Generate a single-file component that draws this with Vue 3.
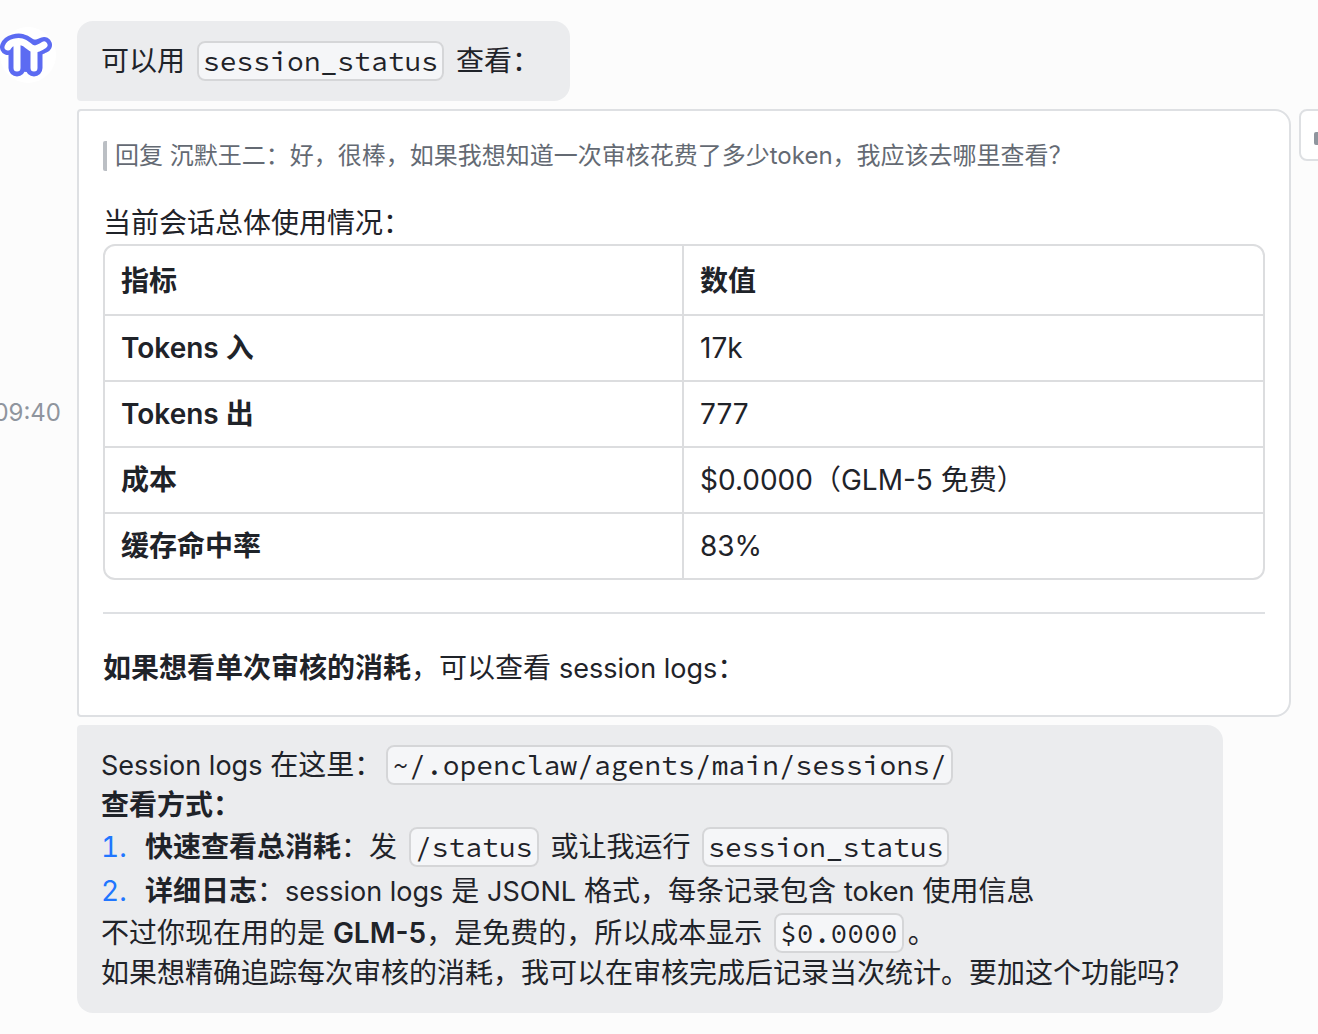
<script setup>
const rows = [
  { name: 'Tokens 入', value: '17k' },
  { name: 'Tokens 出', value: '777' },
  { name: '成本', value: '$0.0000（GLM-5 免费）' },
  { name: '缓存命中率', value: '83%' },
]
</script>

<template>
  <main class="chat" lang="zh-CN">
    <article class="message">
      <div class="gutter gutter-avatar">
        <svg class="avatar" viewBox="0 0 56 56" role="img" aria-label="头像">
          <circle cx="28" cy="28" r="28" fill="#ffffff" />
          <path d="M17 14H34V43L26 45L17 43Z" fill="#5c6bf2" />
          <g fill="none" stroke-linecap="round" stroke-linejoin="round">
            <g stroke="#5c6bf2">
              <path d="M8 20C10 15 18 14 22 15C27 16 29 21 34 21C38 21 41 19 44 18" stroke-width="16" />
              <path d="M17 17V41M34 21V41" stroke-width="17" />
            </g>
            <g stroke="#ffffff" stroke-width="7">
              <path d="M17 17V41M34 23V41" />
              <path d="M8 20C10 15 18 14 22 15C27 16 29 21 34 22C38 22 41 20 44 18" />
            </g>
          </g>
        </svg>
      </div>
      <div class="bubble bubble-first">
        <p>可以用 <code>session_status</code> 查看：</p>
      </div>
    </article>

    <article class="message">
      <div class="gutter gutter-time"><time>09:40</time></div>
      <section class="card">
        <blockquote>回复 沉默王二：好，很棒，如果我想知道一次审核花费了多少token，我应该去哪里查看？</blockquote>
        <p class="lead">当前会话总体使用情况：</p>
        <div class="table-frame">
          <table>
            <thead>
              <tr><th scope="col">指标</th><th scope="col">数值</th></tr>
            </thead>
            <tbody>
              <tr v-for="row in rows" :key="row.name">
                <th scope="row">{{ row.name }}</th>
                <td>{{ row.value }}</td>
              </tr>
            </tbody>
          </table>
        </div>
        <hr />
        <p><strong>如果想看单次审核的消耗</strong>，可以查看 <span class="latin">session logs</span>：</p>
      </section>
      <div class="actions">
        <button type="button" class="action" aria-label="赞">
          <svg viewBox="0 0 28 28" fill="#8f959e">
            <rect x="0" y="11" width="6" height="13" rx="2" />
            <path d="M8 12L13 4C16 4 17 6 16 11H23C25 11 26 13 25 15L23 22C22 24 21 24 20 24H8Z" />
          </svg>
        </button>
      </div>
    </article>

    <article class="message">
      <div class="gutter"></div>
      <div class="bubble bubble-last">
        <p><span class="latin">Session logs</span> 在这里：<code>~/.openclaw/agents/main/sessions/</code></p>
        <p><strong>查看方式：</strong></p>
        <ol>
          <li><span><strong>快速查看总消耗</strong>：发 <code>/status</code> 或让我运行 <code>session_status</code></span></li>
          <li><span><strong>详细日志</strong>：<span class="latin">session logs</span> 是 <span class="latin">JSONL</span> 格式，每条记录包含 <span class="latin">token</span> 使用信息</span></li>
        </ol>
        <p>不过你现在用的是 <strong>GLM-5</strong>，是免费的，所以成本显示 <code>$0.0000</code>。</p>
        <p>如果想精确追踪每次审核的消耗，我可以在审核完成后记录当次统计。要加这个功能吗？</p>
      </div>
    </article>
  </main>
</template>

<style>
body {
  background: #fcfcfc;
}
</style>

<style scoped>
.chat {
  display: flex;
  flex-direction: column;
  gap: 8px;
  padding: 21px 0;
  overflow: hidden;
  color: #1f2329;
  font-family: Inter, "Noto Sans CJK SC", sans-serif;
  font-size: 28px;
  line-height: 40px;
}

.message {
  display: grid;
  grid-template-columns: 77px minmax(0, 1fr) 27px;
}

.gutter {
  display: flex;
  justify-content: flex-end;
}

.gutter-avatar {
  justify-content: flex-start;
  align-items: flex-start;
  padding-top: 6px;
}

.gutter-time {
  align-items: center;
  padding-right: 16px;
  color: #8f959e;
  font-size: 24px;
}

.avatar {
  display: block;
  width: 56px;
  height: 56px;
}

p {
  margin: 0;
}

strong {
  font-weight: 600;
}

.latin {
  font-size: 27px;
  line-height: 1;
}

.bubble {
  justify-self: start;
  padding: 20px 30px 20px 24px;
  background: #ebecee;
}

.bubble-first {
  border-radius: 16px 16px 16px 4px;
}

.bubble-last {
  border-radius: 4px 16px 16px 16px;
}

code {
  margin: 0 4px;
  padding: 0 4px;
  border: 2px solid #d5d6d8;
  border-radius: 8px;
  background: #f5f6f8;
  font-family: "Source Code Pro", "Liberation Mono", monospace;
  font-size: 28px;
  line-height: 1;
}

.card {
  padding: 30px 24px 27px;
  border: 2px solid #dee0e3;
  border-radius: 4px 16px 16px 4px;
  background: #ffffff;
}

blockquote {
  margin: 0 0 32px;
  padding-left: 8px;
  border-left: 4px solid #bbbfc4;
  border-radius: 2px;
  color: #646a73;
  font-size: 24px;
  line-height: 30px;
}

.lead {
  line-height: 41px;
}

.table-frame {
  border: 2px solid #dcdddf;
  border-radius: 12px;
  overflow: hidden;
}

table {
  width: 100%;
  border-spacing: 0;
  table-layout: fixed;
}

th,
td {
  padding: 12px 16px;
  border-bottom: 2px solid #dcdddf;
  text-align: left;
}

th {
  font-weight: 600;
}

thead th {
  padding: 15px 16px 13px;
}

th:first-child {
  border-right: 2px solid #dcdddf;
}

tbody tr:last-child > * {
  border-bottom: 0;
}

hr {
  height: 2px;
  margin: 32px 0 34px;
  border: 0;
  background: #dee0e3;
}

.action {
  box-sizing: border-box;
  width: 60px;
  height: 52px;
  margin-left: 8px;
  padding: 10px 13px;
  border: 2px solid #dee0e3;
  border-radius: 8px;
  background: #ffffff;
}

.action svg {
  display: block;
  width: 28px;
  height: 28px;
}

ol {
  margin: 0;
  padding: 0;
  list-style: none;
  counter-reset: step;
  line-height: 44px;
}

li {
  display: flex;
  counter-increment: step;
}

li::before {
  content: counter(step) ".";
  flex: 0 0 44px;
  color: #2076ff;
  font-variant-numeric: tabular-nums;
}
</style>
